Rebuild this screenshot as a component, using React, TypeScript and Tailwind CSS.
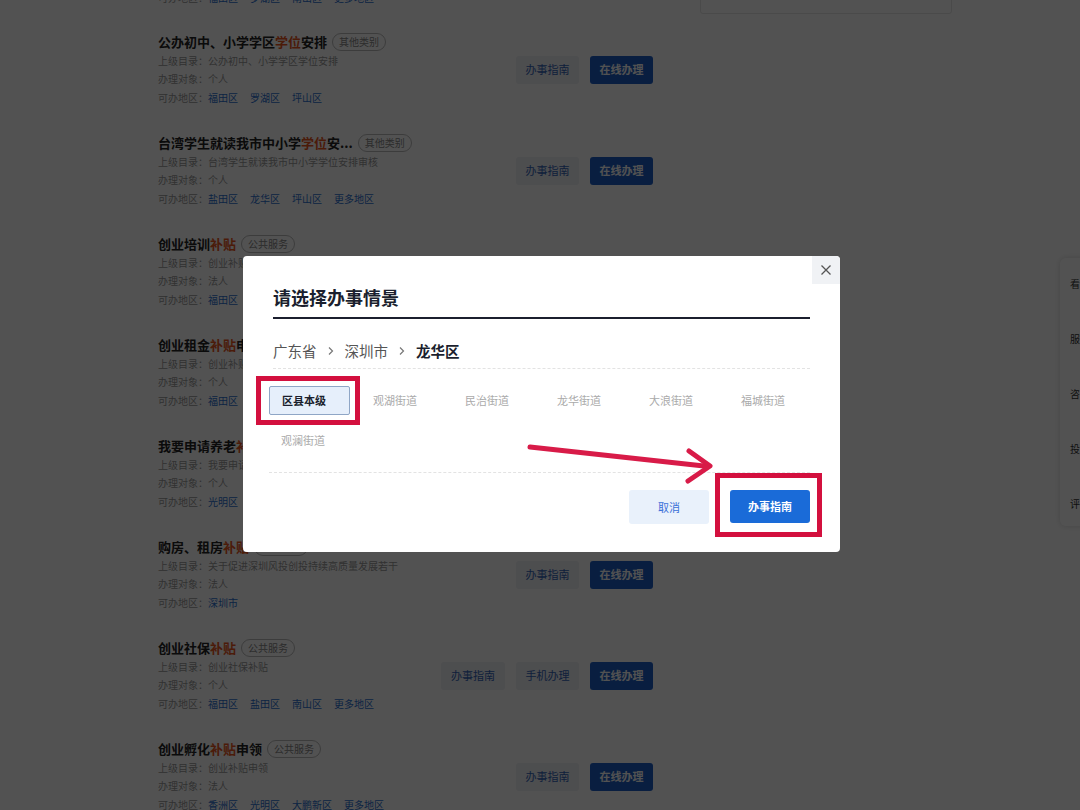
import React from 'react'

const FONT = { fontFamily: '"Noto Sans CJK SC", "Noto Sans", sans-serif' }

type Item = {
  pre: string
  hl: string
  post: string
  tag: string
  dir: string
  obj: string
  areas: string[]
  mobile?: boolean
}

const ITEMS: Item[] = [
  { pre: '公办初中、小学学区', hl: '学位', post: '安排', tag: '其他类别', dir: '公办初中、小学学区学位安排', obj: '个人', areas: ['福田区', '罗湖区', '坪山区'] },
  { pre: '台湾学生就读我市中小学', hl: '学位', post: '安...', tag: '其他类别', dir: '台湾学生就读我市中小学学位安排审核', obj: '个人', areas: ['盐田区', '龙华区', '坪山区', '更多地区'] },
  { pre: '创业培训', hl: '补贴', post: '', tag: '公共服务', dir: '创业补贴申领', obj: '法人', areas: ['福田区', '罗湖区', '南山区'] },
  { pre: '创业租金', hl: '补贴', post: '申领', tag: '公共服务', dir: '创业补贴申领', obj: '个人', areas: ['福田区', '南山区'] },
  { pre: '我要申请养老', hl: '补贴', post: '', tag: '公共服务', dir: '我要申请养老补贴', obj: '个人', areas: ['光明区'] },
  { pre: '购房、租房', hl: '补贴', post: '', tag: '公共服务', dir: '关于促进深圳风投创投持续高质量发展若干', obj: '法人', areas: ['深圳市'] },
  { pre: '创业社保', hl: '补贴', post: '', tag: '公共服务', dir: '创业社保补贴', obj: '个人', areas: ['福田区', '盐田区', '南山区', '更多地区'], mobile: true },
  { pre: '创业孵化', hl: '补贴', post: '申领', tag: '公共服务', dir: '创业补贴申领', obj: '法人', areas: ['香洲区', '光明区', '大鹏新区', '更多地区'] },
]

function ListItem({ item }: { item: Item }) {
  return (
    <div className="flex items-center justify-between h-[101px]">
      <div className="flex flex-col">
        <div className="flex items-center gap-[5px] h-[20px]">
          <span className="text-[13px] font-bold text-[#222]">
            {item.pre}
            <span className="text-[#e8561c]">{item.hl}</span>
            {item.post}
          </span>
          <span className="text-[10px] leading-none text-[#888] border border-[#bbb] rounded-full px-[6px] py-[3px]">
            {item.tag}
          </span>
        </div>
        <div className="flex flex-col text-[10px] text-[#999] leading-[18.5px]">
          <span>上级目录：{item.dir}</span>
          <span>办理对象：{item.obj}</span>
          <span>
            可办地区：
            {item.areas.map((a, i) => (
              <span key={a} className={`text-[#2a6fd0] ${i > 0 ? 'ml-[12px]' : ''}`}>
                {a}
              </span>
            ))}
          </span>
        </div>
      </div>
      <div className="flex items-center gap-[11px]">
        {item.mobile && (
          <button className="w-[64px] h-[28px] rounded-[3px] bg-[#eef1f5] text-[11px] text-[#3463b8]">办事指南</button>
        )}
        <button className="w-[63px] h-[28px] rounded-[3px] bg-[#eef1f5] text-[11px] text-[#3463b8]">
          {item.mobile ? '手机办理' : '办事指南'}
        </button>
        <button className="w-[63px] h-[28px] rounded-[3px] bg-[#1d5fc8] text-[11px] font-bold text-white">在线办理</button>
      </div>
    </div>
  )
}

const STREETS = ['区县本级', '观湖街道', '民治街道', '龙华街道', '大浪街道', '福城街道', '观澜街道']

function Chevron() {
  return (
    <svg width="8" height="10" viewBox="0 0 8 10" className="mx-[10px]">
      <path d="M2 1.5 L5.5 5 L2 8.5" fill="none" stroke="#777" strokeWidth="1.2" />
    </svg>
  )
}

export default function App() {
  return (
    <div className="relative w-[1080px] h-[810px] overflow-hidden bg-white" style={FONT}>
      {/* page under the mask */}
      <div className="absolute left-[700px] top-[-20px] w-[252px] h-[34px] border border-[#e5e5e5] rounded-[3px]" />
      <div className="absolute left-[1060px] top-[258px] w-[40px] h-[268px] bg-white rounded-l-[6px] shadow-[0_0_6px_rgba(0,0,0,0.15)] flex flex-col gap-[40px] pt-[18px] pl-[10px] text-[10px] text-[#333]">
        <span>看</span>
        <span>服</span>
        <span>咨</span>
        <span>投</span>
        <span>评</span>
      </div>
      <div className="pl-[158px] w-[495px] box-content mt-[-5px]">
        <div className="h-[26px] mt-[-21px] flex items-end text-[10px] text-[#999]">
          <span>
            可办地区：<span className="text-[#2a6fd0]">福田区</span>
            <span className="text-[#2a6fd0] ml-[12px]">罗湖区</span>
            <span className="text-[#2a6fd0] ml-[12px]">南山区</span>
            <span className="text-[#2a6fd0] ml-[12px]">更多地区</span>
          </span>
        </div>
        <div className="mt-[14px]">
          {ITEMS.map((it) => (
            <ListItem key={it.pre + it.post} item={it} />
          ))}
        </div>
      </div>

      {/* mask */}
      <div className="absolute inset-0 bg-[rgba(0,0,0,0.68)]" />

      {/* dialog */}
      <div className="absolute inset-0 flex items-center justify-center pl-[3px]">
        <div className="relative w-[597px] h-[296px] bg-white rounded-[4px] px-[30px] pt-[28px] -translate-y-[1px]">
          <button className="absolute right-0 top-0 w-[28px] h-[28px] bg-[#f0f2f5] flex items-center justify-center rounded-tr-[4px]">
            <svg width="12" height="12" viewBox="0 0 12 12">
              <path d="M1.5 1.5 L10.5 10.5 M10.5 1.5 L1.5 10.5" stroke="#555" strokeWidth="1.3" />
            </svg>
          </button>
          <div className="text-[18px] font-bold text-[#1b1f2e] leading-[26px] pb-[7px] border-b-2 border-[#1b1f2e]">
            请选择办事情景
          </div>
          <div className="flex items-center h-[50px] pt-[14px] text-[14.5px] text-[#555] border-b border-dashed border-[#e3e3e3]">
            <span>广东省</span>
            <Chevron />
            <span>深圳市</span>
            <Chevron />
            <span className="font-bold text-[#1b1f2e]">龙华区</span>
          </div>
          <div className="grid grid-cols-[repeat(6,92px)] gap-y-[11px] pt-[17px] pb-[17px] ml-[-4px] border-b border-dashed border-[#e3e3e3]">
            {STREETS.map((s, i) => (
              <div key={s} className="w-[81px]">
                {i === 0 ? (
                  <div className="h-[29px] flex items-center pl-[12px] text-[11px] font-bold text-[#1b1f2e] bg-[#e6effb] border border-[#8fa6c6] rounded-[2px]">
                    {s}
                  </div>
                ) : (
                  <div className="h-[29px] flex items-center pl-[12px] text-[11px] text-[#aaa]">{s}</div>
                )}
              </div>
            ))}
          </div>
          <div className="flex justify-end gap-[21px] pt-[17px]">
            <button className="w-[80px] h-[34px] rounded-[3px] bg-[#e9f1fb] text-[11px] text-[#3a6fd8]">取消</button>
            <button className="w-[80px] h-[33px] rounded-[3px] bg-[#1a6bd8] text-[11px] font-bold text-white">办事指南</button>
          </div>
        </div>
      </div>

      {/* annotation marks */}
      <div className="absolute left-[256px] top-[376px] w-[104px] h-[49px] border-[5px] border-[#d3103e]" />
      <div className="absolute left-[715px] top-[473px] w-[107px] h-[64px] border-[5px] border-[#d3103e]" />
      <svg className="absolute left-0 top-0" width="1080" height="810" viewBox="0 0 1080 810">
        <path d="M530 447 L704 466" stroke="#d81b48" strokeWidth="5" strokeLinecap="round" fill="none" />
        <path d="M689 451 L710 466 L688 481" stroke="#d81b48" strokeWidth="5" strokeLinecap="round" strokeLinejoin="round" fill="none" />
      </svg>
    </div>
  )
}
